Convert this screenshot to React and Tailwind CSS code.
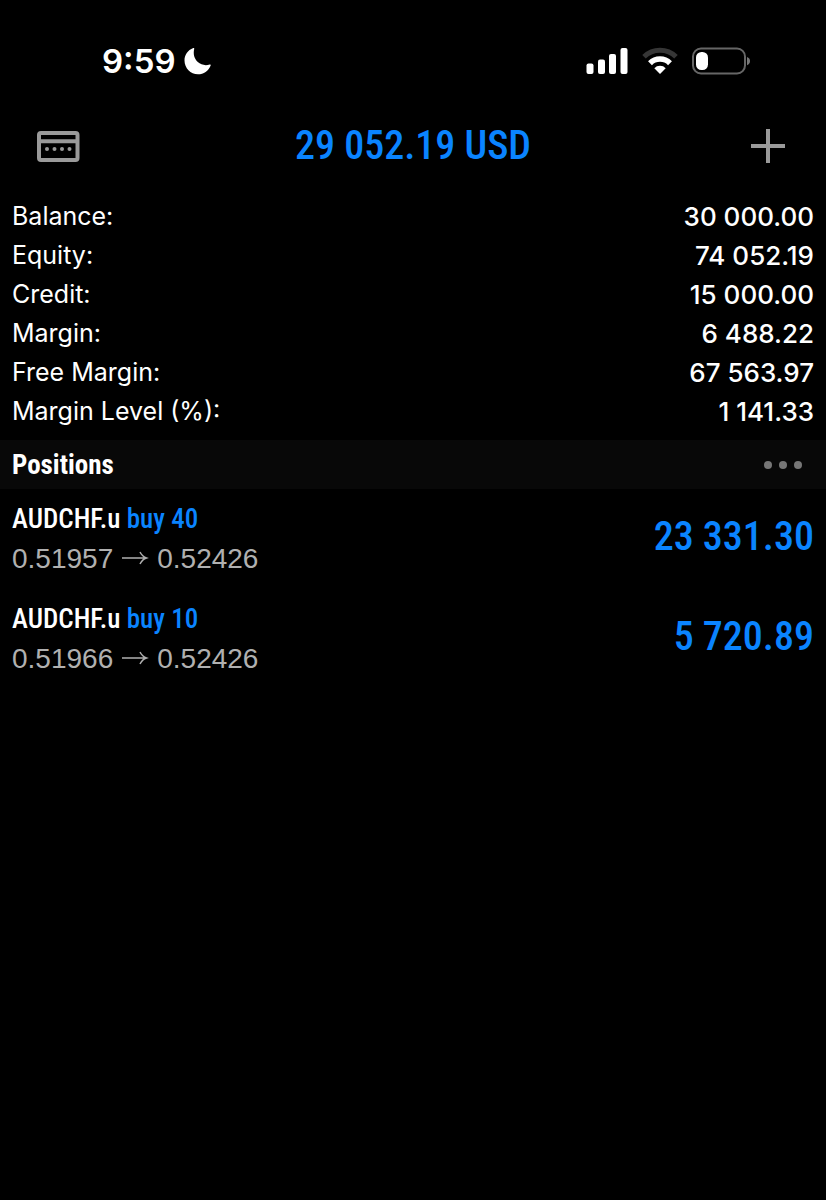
const account = [
  ["Balance:", "30 000.00"],
  ["Equity:", "74 052.19"],
  ["Credit:", "15 000.00"],
  ["Margin:", "6 488.22"],
  ["Free Margin:", "67 563.97"],
  ["Margin Level (%):", "1 141.33"],
];

const positions = [
  { symbol: "AUDCHF.u", side: "buy 40", open: "0.51957", current: "0.52426", profit: "23 331.30" },
  { symbol: "AUDCHF.u", side: "buy 10", open: "0.51966", current: "0.52426", profit: "5 720.89" },
];

function StatusBar() {
  return (
    <div className="flex h-[104px] items-center justify-between pt-[18px] pr-[75px] pl-[102px]">
      <div className="flex items-center gap-2">
        <span className="text-[33px] leading-10 font-semibold">9:59</span>
        <svg className="size-7" viewBox="0 0 28 28" fill="currentColor" aria-hidden="true">
          <path d="M9.300 1C3.700 3 0.500 8 0.500 13.500 0.500 21 6.500 27.300 14 27.300c5.700 0 10.500-3.500 12.600-8.600.300-.700-.200-1.300-.900-1.100-4.200 1.200-8.700.500-11.900-2.500C10.300 11.800 9 7 10.200 2c.200-.800-.200-1.200-.9-1z" />
        </svg>
      </div>
      <div className="flex items-center gap-[14px]">
        <svg className="h-7 w-[42px]" viewBox="0 0 42 28" fill="currentColor" aria-hidden="true">
          <rect x="0.500" y="16.500" width="7" height="10.500" rx="2" />
          <rect x="12" y="12.500" width="7" height="14.500" rx="2" />
          <rect x="23" y="7" width="7" height="20" rx="2" />
          <rect x="34.500" y="1" width="7" height="26" rx="2" />
        </svg>
        <svg className="h-7 w-9" viewBox="0 0 36 28" fill="none" stroke="currentColor" aria-hidden="true">
          <path d="M2 9.800A23 23 0 0 1 34 9.800" stroke="#363636" strokeWidth="5" />
          <path d="M8 16.200a14.200 14.200 0 0 1 20 0" strokeWidth="5.500" />
          <path d="M12.300 21.200a7.900 7.900 0 0 1 11.400 0L18 27z" fill="currentColor" stroke="none" />
        </svg>
        <svg className="h-7 w-[59px]" viewBox="0 0 59 28" aria-hidden="true">
          <rect x="1" y="1.500" width="52" height="25" rx="8" fill="none" stroke="#666" strokeWidth="2" />
          <rect x="4" y="5" width="12" height="18" rx="5.500" fill="#fff" />
          <path d="M55 10c4 1.200 4 7 0 8.200z" fill="#777" />
        </svg>
      </div>
    </div>
  );
}

function Header() {
  return (
    <header className="flex h-[84px] items-center justify-between px-9">
      <button type="button" aria-label="Accounts" className="text-[#9a9a9a]">
        <svg className="h-8 w-11" viewBox="0 0 44 32" aria-hidden="true">
          <rect x="3" y="3" width="38.500" height="27" rx="2" fill="none" stroke="currentColor" strokeWidth="4" />
          <path d="M3 11.300h38" stroke="currentColor" strokeWidth="4" />
          <g fill="currentColor">
            <circle cx="11" cy="19" r="2" />
            <circle cx="18.500" cy="19" r="2" />
            <circle cx="26" cy="19" r="2" />
            <circle cx="33.500" cy="19" r="2" />
          </g>
        </svg>
      </button>
      <h1 className="font-['Roboto_Condensed',sans-serif] text-[40px] leading-12 font-medium text-[#0a84ff]">
        29 052.19 USD
      </h1>
      <button type="button" aria-label="New order" className="text-[#9a9a9a]">
        <svg className="h-9 w-11" viewBox="0 0 44 36" aria-hidden="true">
          <path d="M22 1v34M5 18h34" stroke="currentColor" strokeWidth="4" />
        </svg>
      </button>
    </header>
  );
}

function Position({ item }) {
  return (
    <li className="flex h-[100px] items-center justify-between">
      <div>
        <p className="font-['Roboto_Condensed',sans-serif] text-[27px] leading-10 font-medium">
          {item.symbol} <span className="text-[#0a84ff]">{item.side}</span>
        </p>
        <p className="flex items-center gap-2 font-['Liberation_Sans',sans-serif] text-[28px] leading-10 text-[#b0b0b0]">
          <span>{item.open}</span>
          <svg className="h-4 w-7" viewBox="0 0 28 16" fill="none" stroke="currentColor" strokeWidth="1.500" aria-label="to">
            <path d="M1 7h24M19 1c1.500 3 3.500 5 6.500 6-3 1-5 3-6.500 6" />
          </svg>
          <span>{item.current}</span>
        </p>
      </div>
      <p className="pb-1 font-['Roboto_Condensed',sans-serif] text-[40px] leading-12 font-medium text-[#0a84ff]">
        {item.profit}
      </p>
    </li>
  );
}

export default function App() {
  return (
    <main className="min-h-screen bg-black font-['Inter',sans-serif] text-white">
      <StatusBar />
      <Header />
      <dl className="px-3 py-[9px]">
        {account.map(([label, value]) => (
          <div key={label} className="flex h-[39px] items-center justify-between">
            <dt className="text-[25px]">{label}</dt>
            <dd className="text-[26px] font-medium">{value}</dd>
          </div>
        ))}
      </dl>
      <section>
        <div className="flex h-[49px] items-center justify-between bg-[#080808] pr-[23px] pl-3">
          <h2 className="font-['Roboto_Condensed',sans-serif] text-[27px] leading-10 font-bold">
            Positions
          </h2>
          <button type="button" aria-label="More options" className="text-[#767676]">
            <svg className="h-3 w-10" viewBox="0 0 40 12" fill="currentColor" aria-hidden="true">
              <circle cx="5" cy="6" r="4" />
              <circle cx="20" cy="6" r="4" />
              <circle cx="35" cy="6" r="4" />
            </svg>
          </button>
        </div>
        <ul className="px-3">
          {positions.map((item) => (
            <Position key={item.open} item={item} />
          ))}
        </ul>
      </section>
    </main>
  );
}
